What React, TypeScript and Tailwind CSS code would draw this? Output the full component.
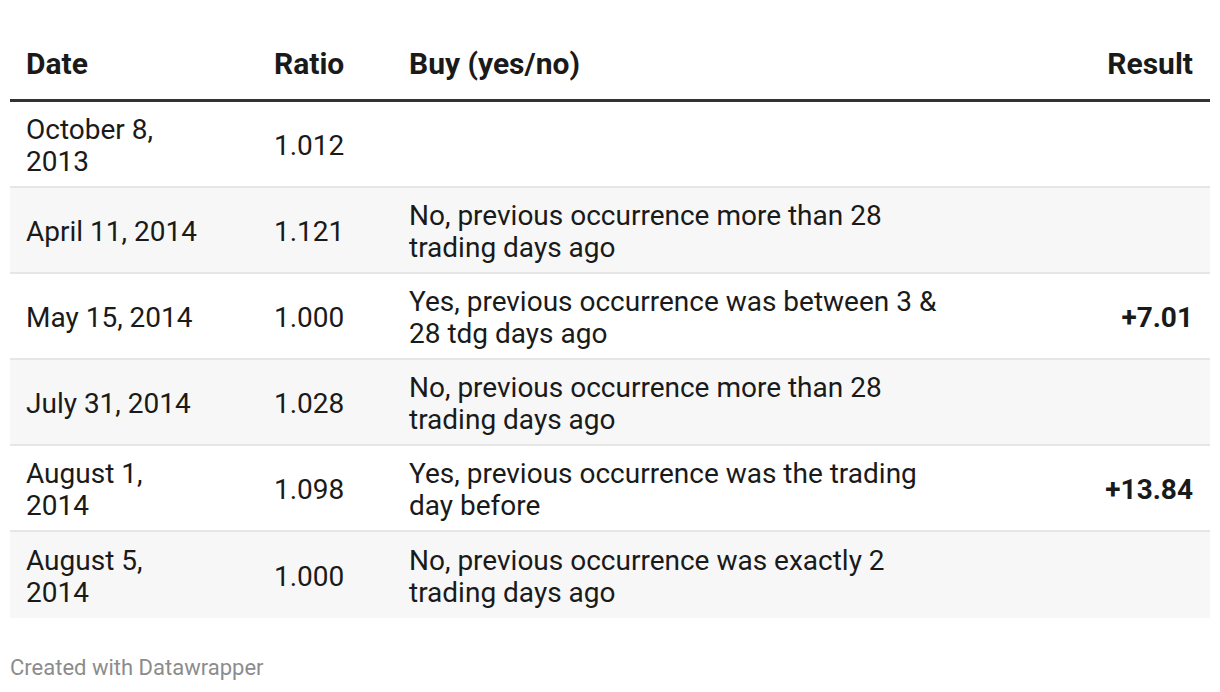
import React from 'react'

interface Row {
  date: string
  ratio: string
  buy: string
  result: string
}

const rows: Row[] = [
  { date: 'October 8, 2013', ratio: '1.012', buy: '', result: '' },
  { date: 'April 11, 2014', ratio: '1.121', buy: 'No, previous occurrence more than 28 trading days ago', result: '' },
  { date: 'May 15, 2014', ratio: '1.000', buy: 'Yes, previous occurrence was between 3 & 28 tdg days ago', result: '+7.01' },
  { date: 'July 31, 2014', ratio: '1.028', buy: 'No, previous occurrence more than 28 trading days ago', result: '' },
  { date: 'August 1, 2014', ratio: '1.098', buy: 'Yes, previous occurrence was the trading day before', result: '+13.84' },
  { date: 'August 5, 2014', ratio: '1.000', buy: 'No, previous occurrence was exactly 2 trading days ago', result: '' },
]

const cols = 'grid grid-cols-[248px_135px_574px_1fr]'

const App: React.FC = () => {
  return (
    <div className="w-[1220px] h-[692px] bg-white px-[10px] pt-[46px] font-['Roboto',sans-serif] text-[#1a1a1a]">
      <div className={`${cols} border-b-[3px] border-[#333333] pb-[17px] text-[30px] leading-[36px] font-bold`}>
        <div className="pl-[16px]">Date</div>
        <div className="pl-[16px]">Ratio</div>
        <div className="pl-[16px]">Buy (yes/no)</div>
        <div className="pr-[17px] text-right">Result</div>
      </div>
      {rows.map((row, i) => (
        <div
          key={row.date}
          className={`${cols} h-[86px] pt-[3px] items-center text-[28px] leading-[32px] ${
            i % 2 === 1 ? 'bg-[#f7f7f7]' : 'bg-white'
          } ${i < rows.length - 1 ? 'border-b-2 border-[#e6e6e6]' : ''}`}
        >
          <div className="pl-[16px]">
            <div className="w-[180px]">{row.date}</div>
          </div>
          <div className="pl-[16px]">{row.ratio}</div>
          <div className="pl-[16px] pr-[17px]">{row.buy}</div>
          <div className="pr-[17px] text-right font-bold">{row.result}</div>
        </div>
      ))}
      <div className="mt-[37px] text-[22px] leading-[26px] text-[#8c8c8c]">Created with Datawrapper</div>
    </div>
  )
}

export default App
